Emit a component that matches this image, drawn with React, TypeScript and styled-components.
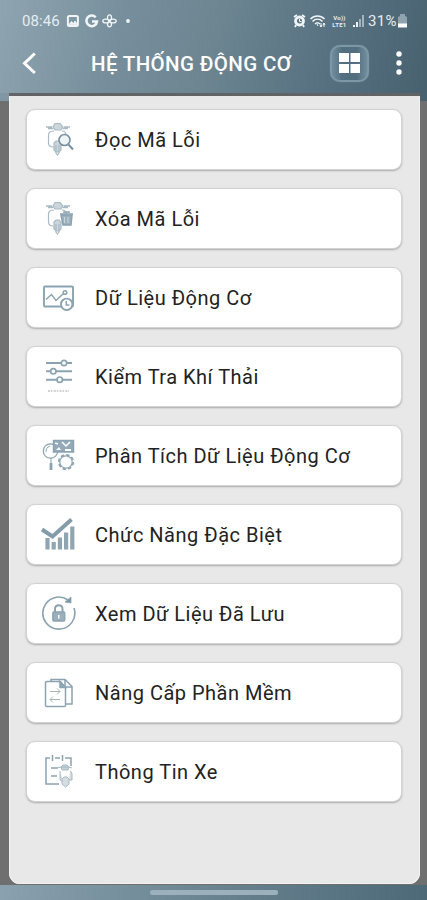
import React from "react";
import styled, { createGlobalStyle } from "styled-components";

const GlobalStyle = createGlobalStyle`
  * { box-sizing: border-box; }
  body { margin: 0; background: #707070; font-family: Roboto, "Noto Sans", sans-serif; }
`;

const Screen = styled.div`
  width: 427px;
  height: 900px;
  display: flex;
  flex-direction: column;
  overflow: hidden;
`;

const Header = styled.header`
  height: 93px;
  flex: none;
  display: flex;
  flex-direction: column;
  color: #fff;
  background: linear-gradient(107deg, #8fa4b1 0%, #778f9c 28%, #6c8591 50%, #587181 76%, #48616f 100%);
`;

const StatusBar = styled.div`
  height: 40px;
  padding: 2px 20px 0 22px;
  display: flex;
  align-items: center;
  justify-content: space-between;
  color: #e6edf1;
`;

const StatusGroup = styled.div<{ $gap: number }>`
  display: flex;
  align-items: center;
  gap: ${(p) => p.$gap}px;
`;

const StatusText = styled.span<{ $spacing: number }>`
  font-size: 15px;
  line-height: 18px;
  letter-spacing: ${(p) => p.$spacing}px;
`;

const TitleBar = styled.div`
  height: 53px;
  padding: 0 22px 7px 21px;
  display: flex;
  align-items: center;
`;

const IconButton = styled.button<{ $width: number }>`
  width: ${(p) => p.$width}px;
  height: 38px;
  padding: 0;
  border: 0;
  display: flex;
  align-items: center;
  background: none;
  color: #fff;
`;

const Title = styled.h1`
  width: 239px;
  margin: 2px 0 0;
  font-size: 20.5px;
  line-height: 28px;
  font-weight: 500;
  letter-spacing: 0.36px;
  white-space: nowrap;
`;

const GridButton = styled.button`
  width: 39px;
  height: 37px;
  margin-right: 26px;
  padding: 0;
  display: flex;
  align-items: center;
  justify-content: center;
  border: 2px solid #7c97a6;
  border-radius: 10px;
  background: linear-gradient(90deg, #718d9d, #526f80 30%, #526f80 70%, #718d9d);
  box-shadow: 0 0 1px #8ba5b3;
`;

const Body = styled.div`
  flex: none;
  height: 792px;
  background: linear-gradient(90deg, #8197a3, #48616f) 0 0 / 100% 8px no-repeat, #6f6f6f;
`;

const Panel = styled.main`
  height: 791px;
  margin: 0 7px 0 9px;
  padding: 13px 18px 0 17px;
  border-top: 3px solid #626364;
  border-radius: 0 0 11px 11px;
  background: #e8e8e8;
  box-shadow: inset -1px -1px 0 #f4f1f1, inset 1px 0 0 #f2f2f2;
`;

const List = styled.nav`
  display: flex;
  flex-direction: column;
  gap: 18px;
`;

const Card = styled.button`
  height: 61px;
  padding: 0 0 0 13px;
  display: flex;
  align-items: center;
  border: 1px solid #d2d2d2;
  border-radius: 9px;
  background: #fff;
  box-shadow: 0 1px 2px #aaa;
  font-family: inherit;
  text-align: left;
`;

const CardIcon = styled.svg`
  width: 38px;
  height: 38px;
  margin-right: 17px;
  flex: none;
  fill: none;
  stroke: #8ba3b1;
  stroke-width: 1.5;
`;

const Label = styled.span`
  font-size: 20px;
  line-height: 28px;
  letter-spacing: 0.5px;
  color: #222;
  white-space: nowrap;
`;

const Footer = styled.footer`
  flex: 1;
  display: flex;
  justify-content: center;
  padding-top: 5px;
  background: linear-gradient(97deg, #8aa1af, #768f9d 30%, #637d8b 60%, #4d6978);
`;

const HomeBar = styled.div`
  width: 128px;
  height: 5px;
  border-radius: 2px;
  background: #9bb0bb;
`;

const Scooter = () => (
  <g stroke="#a9bac3" strokeWidth="1.2">
    <path d="M6 6h6m12 0h6M8 7.500h5m10 0h5" strokeWidth="1.5" />
    <path d="M13 6l2-3.500h5L23 6l-2 3h-6z" fill="#cbd6db" />
    <path d="M14 10c-5 0-5.500 2-5.500 5v7c0 3 2 4 5 4M22 10c3 0 4 2 4 4" />
    <path d="M14 29v-7l2-2h3l2 2v7l-2 2h-3z" fill="#cbd6db" />
    <path d="M16 24v8l1.500 2 1.500-2v-8" />
  </g>
);

const icons: Record<string, React.ReactNode> = {
  read: (
    <>
      <Scooter />
      <circle cx="24.500" cy="19" r="5.500" fill="#eef3f5" stroke="#7891a0" strokeWidth="1.6" />
      <path d="M28.500 23.500l4.500 5" stroke="#7891a0" strokeWidth="2" />
    </>
  ),
  erase: (
    <>
      <Scooter />
      <path d="M20 14h13M24 13v-1h5v1" strokeWidth="1.6" />
      <path d="M21 15h11l-1 10h-8z" fill="#9db1bd" />
      <path d="M24.500 17v6m3.500-6v6" stroke="#d5e0e5" strokeWidth=".8" />
    </>
  ),
  data: (
    <>
      <rect x="4" y="7.500" width="29" height="20" rx="1" strokeWidth="1.9" />
      <path d="M6 20.500l5.500-5 4.500 6 7.500-7" />
      <circle cx="25" cy="13.500" r="1.800" />
      <circle cx="26.700" cy="25.300" r="5.700" fill="#fff" strokeWidth="1.9" />
      <path d="M26.300 22v4h3" />
    </>
  ),
  sliders: (
    <>
      <path d="M6 5h26M6 13.300h26M6 21.700h26" strokeWidth="2" />
      <g fill="#fff" strokeWidth="1.7">
        <circle cx="24" cy="5" r="2.700" />
        <circle cx="13.300" cy="13.300" r="2.700" />
        <circle cx="19.700" cy="21.700" r="2.700" />
      </g>
      <path d="M8 33h21" strokeWidth="1.5" strokeDasharray="2 1 1.500 1.300" stroke="#c2c2c2" />
    </>
  ),
  analysis: (
    <>
      <circle cx="10.500" cy="14" r="7.200" strokeWidth="1.2" />
      <path d="M6 15c0-3 1-5 4-6M11 21v5" strokeWidth="1" />
      <path d="M11 26v7" strokeWidth="2.800" />
      <rect x="13.500" y="3.500" width="20" height="11.500" fill="#93abb8" />
      <path d="M16 13l3-3 2 3zm9-1h6v2h-6z" fill="#fff" stroke="none" />
      <path d="M15 6l3 1m4-2l4 4 4-4" stroke="#fff" strokeWidth="1.500" />
      <circle cx="26" cy="25" r="7.200" strokeDasharray="3.400 2.250" strokeWidth="1.8" />
      <circle cx="26" cy="25" r="6.200" fill="#fff" strokeWidth="1.2" />
    </>
  ),
  growth: (
    <>
      <path d="M2 13.500l10.500 7L31.500 3.500" stroke="#849ba9" strokeWidth="4" />
      <path d="M7.500 22v11.500m6.200-7.500v7.500m6.200-12v12m6.200-17v17m6.200-23v23" stroke="#8fa5b2" strokeWidth="4.200" />
    </>
  ),
  saved: (
    <>
      <path d="M28 5A16 16 0 1 0 34 13" strokeWidth="1.600" />
      <path d="M25 7l6-5v6z" fill="#8098a6" strokeWidth=".8" />
      <rect x="12.800" y="17" width="12" height="9" rx="1" fill="#9bb0bc" strokeWidth="1.300" />
      <path d="M15 17v-3c0-5 7.500-5 7.500 0v3" strokeWidth="2" />
      <path d="M18.800 20v3.500" stroke="#fff" />
    </>
  ),
  upgrade: (
    <>
      <path d="M11 7V5.500h14l7 7V30h-6M25 6v7h7" />
      <path d="M6.500 7.500H20l5.500 6v18q0 1-1 1h-18q-1 0-1-1v-23q0-1 1-1z" fill="#fff" />
      <path d="M20 7.500v6h5.500z" fill="#93aab7" />
      <path d="M10 17.500h10m-3-3 3 3-3 3M20 25.500H10m3-3-3 3 3 3" stroke="#aab5ba" strokeWidth="1" />
    </>
  ),
  vehicle: (
    <>
      <path d="M10 5H6v26h13M15 5h5m5 0h6v8M12.500 2v6m10-6v6M11 15h7m-7 8h6" />
      <path d="M17 15l4-1 2-2h4l2 2 3 1M21 14h8l-1 3h-6z" fill="#c6d2d8" stroke="#a9bac3" strokeWidth="1" />
      <path d="M20 18v8q0 2 3 2m7-10c2 1 2 3 2 4v5h-3M22 26l2-2h3l2 2v5l-3.500 3-3.500-3z" fill="#d4dee2" stroke="#a9bac3" strokeWidth="1" />
    </>
  ),
};

const items = [
  { icon: "read", label: "Đọc Mã Lỗi" },
  { icon: "erase", label: "Xóa Mã Lỗi" },
  { icon: "data", label: "Dữ Liệu Động Cơ" },
  { icon: "sliders", label: "Kiểm Tra Khí Thải" },
  { icon: "analysis", label: "Phân Tích Dữ Liệu Động Cơ" },
  { icon: "growth", label: "Chức Năng Đặc Biệt" },
  { icon: "saved", label: "Xem Dữ Liệu Đã Lưu" },
  { icon: "upgrade", label: "Nâng Cấp Phần Mềm" },
  { icon: "vehicle", label: "Thông Tin Xe" },
];

const LeftStatusIcons = () => (
  <svg width="70" height="16" viewBox="0 0 70 16" fill="none" stroke="#f1f5f7">
    <rect x="1.900" y="3" width="10" height="10" rx="1.500" strokeWidth="2" />
    <path d="M3 11.500l2.500-3 2 2L9 8l2.500 3.500z" fill="#f1f5f7" strokeWidth=".8" />
    <path d="M29.700 4.300A5.300 5.300 0 1 0 31 8.500H26" strokeWidth="2.500" />
    <g strokeWidth="1.300">
      <ellipse cx="43.500" cy="4.700" rx="2" ry="2.800" />
      <ellipse cx="40" cy="8" rx="3.200" ry="1.900" />
      <ellipse cx="47" cy="8" rx="3.200" ry="1.900" />
      <ellipse cx="43.500" cy="11.300" rx="2" ry="2.500" />
    </g>
    <circle cx="62" cy="8" r="1.900" fill="#f1f5f7" stroke="none" />
  </svg>
);

const NetworkLabel = styled.span`
  width: 17px;
  display: flex;
  flex-direction: column;
  align-items: center;
  font-size: 6px;
  line-height: 7px;
  font-weight: 700;
  letter-spacing: 0.3px;
`;

const RightStatusIcons = () => (
  <>
    <svg width="34" height="16" viewBox="0 0 34 16" fill="none" stroke="#f1f5f7">
      <path d="M1 4l3-2m5 0l3 2M3 12l-1 2m8-2l1 2" strokeWidth="1.800" />
      <circle cx="6.500" cy="8" r="4" strokeWidth="2.800" />
      <path d="M6.500 6v2.500h2" />
      <path d="M17.500 6c4-4 10-4 14 0M19.500 8.500c3-3 7-3 10 0M22 11c2-2 4-1 5 0" strokeWidth="1.500" />
      <path d="M25 13l-1-2M28 14v-4m3 0v4m-4-2l1 2 1-2m1 0l1-2 1 2" strokeWidth="1" />
    </svg>
    <NetworkLabel><span>Vo))</span><span>LTE1</span></NetworkLabel>
    <svg width="12" height="14" viewBox="0 0 12 14">
      <path d="M1 13v-2h2v2zm3 0V8h2v5z" fill="#edf3f6" />
      <path d="M7 13V5h2v8zm3 0V1h2v12z" fill="#a2b3bd" />
    </svg>
  </>
);

const Battery = () => (
  <svg width="9" height="14" viewBox="0 0 9 14">
    <path d="M0 10V3l2-1V0h5v2l2 1v7z" fill="#8fa3ae" />
    <path d="M0 9.500h9v4H0z" fill="#fff" />
  </svg>
);

export default function App() {
  return (
    <Screen>
      <GlobalStyle />
      <Header>
        <StatusBar>
          <StatusGroup $gap={6}>
            <StatusText $spacing={0.1}>08:46</StatusText>
            <LeftStatusIcons />
          </StatusGroup>
          <StatusGroup $gap={4}>
            <RightStatusIcons />
            <StatusGroup $gap={1}>
              <StatusText $spacing={0.4}>31%</StatusText>
              <Battery />
            </StatusGroup>
          </StatusGroup>
        </StatusBar>
        <TitleBar>
          <IconButton $width={70} aria-label="Quay lại">
            <svg width="17" height="24" viewBox="0 0 17 24" fill="none" stroke="white" strokeWidth="3">
              <path d="M13.800 2.500L3.500 12.300l10.300 9.700" />
            </svg>
          </IconButton>
          <Title>HỆ THỐNG ĐỘNG CƠ</Title>
          <GridButton aria-label="Menu">
            <svg width="21" height="20" viewBox="0 0 21 20" fill="white">
              <path d="M0 0h10v9H0zM11.500 0H21v9h-9.500zM0 11h10v9H0zM11.500 11H21v9h-9.500z" />
            </svg>
          </GridButton>
          <IconButton $width={8} aria-label="Thêm">
            <svg width="8" height="24" viewBox="0 0 8 24" fill="white">
              <circle cx="4" cy="3" r="2.700" />
              <circle cx="4" cy="12" r="2.700" />
              <circle cx="4" cy="21" r="2.700" />
            </svg>
          </IconButton>
        </TitleBar>
      </Header>
      <Body>
        <Panel>
          <List>
            {items.map((item) => (
              <Card key={item.icon}>
                <CardIcon viewBox="0 0 38 38">{icons[item.icon]}</CardIcon>
                <Label>{item.label}</Label>
              </Card>
            ))}
          </List>
        </Panel>
      </Body>
      <Footer><HomeBar /></Footer>
    </Screen>
  );
}
